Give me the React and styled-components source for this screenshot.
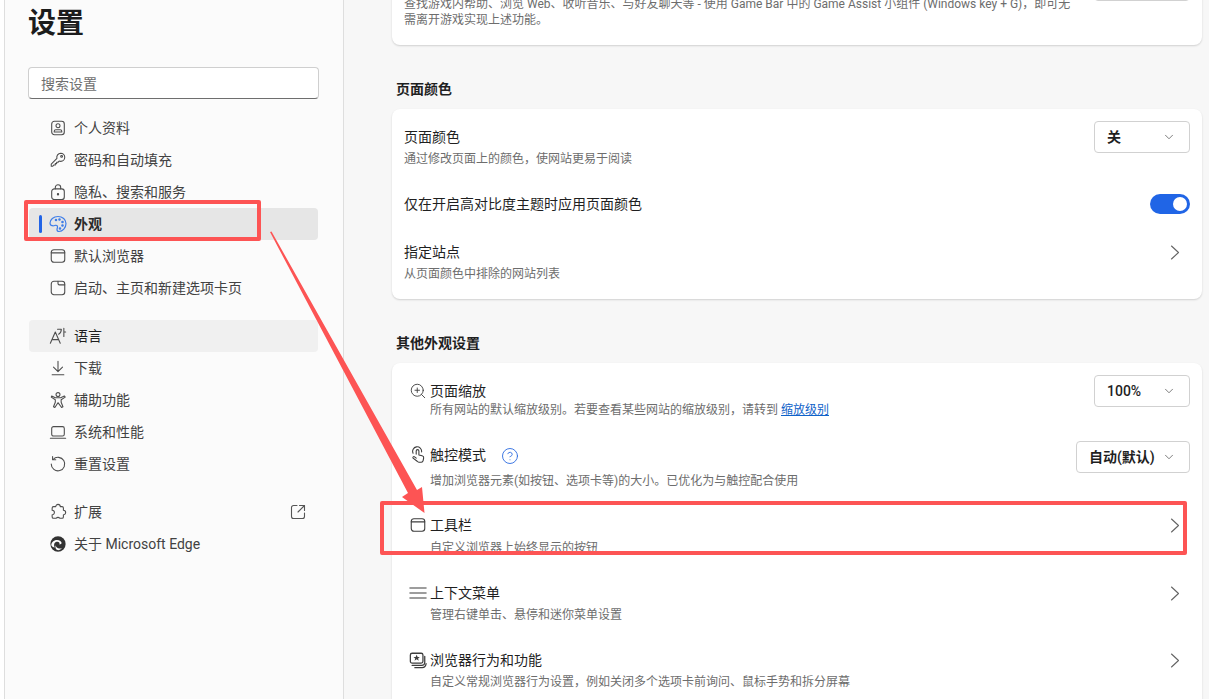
import React from 'react';
import styled, { createGlobalStyle } from 'styled-components';
import { ChevronDown, CircleHelp, ZoomIn } from 'lucide-react';

const GlobalStyle = createGlobalStyle`
	html, body { margin: 0; padding: 0; background: #fff; }
	body { font-family: Roboto, "Noto Sans CJK SC", sans-serif; color: #1f1f1f; }
	* { box-sizing: border-box; }
`;

const Page = styled.div`
	position: relative;
	display: flex;
	height: 100vh;
	padding-left: 4px;
	overflow: hidden;
`;

const Sidebar = styled.aside`
	flex: 0 0 340px;
	padding: 4px 0 0 23px;
	background: #fbfbfb;
	border-left: 1px solid #dedede;
	border-right: 1px solid #dedede;
`;

const Title = styled.h1`
	margin: 0 0 23px;
	font-size: 28px;
	line-height: 40px;
	font-weight: 700;
	color: #1c1c1c;
`;

const Search = styled.input`
	display: block;
	width: 291px;
	height: 32px;
	padding: 2px 12px 0;
	margin-bottom: 13px;
	font: inherit;
	font-size: 14px;
	background: #fff;
	border: 1px solid #cfcfcf;
	border-bottom-color: #6e6e6e;
	border-radius: 4px;
	&::placeholder { color: #6f6f6f; opacity: 1; }
`;

const NavGroup = styled.nav`
	margin: 0 0 16px 1px;
	width: 289px;
`;

const NavItem = styled.div`
	position: relative;
	display: flex;
	align-items: center;
	height: 32px;
	padding: 0 12px 0 19px;
	gap: 6px;
	font-size: 14px;
	border-radius: 4px;
	color: ${(p) => (p.$active ? '#2b2b2b' : p.$hover ? '#1f1f1f' : '#424242')};
	font-weight: ${(p) => (p.$active ? 700 : 400)};
	background: ${(p) => (p.$active ? '#e6e6e6' : p.$hover ? '#f0f0f0' : 'transparent')};
`;

const NavLabel = styled.span`
	margin-bottom: 2px;
`;

const ActiveBar = styled.span`
	position: absolute;
	left: 10px;
	top: 7px;
	width: 3px;
	height: 18px;
	border-radius: 2px;
	background: #2264e6;
`;

const IconSlot = styled.span`
	display: flex;
	align-items: center;
	justify-content: center;
	flex: 0 0 20px;
	width: 20px;
	height: 20px;
	color: ${(p) => p.$color || '#4d4d4d'};
`;

const External = styled.span`
	display: flex;
	margin-left: auto;
	color: #555;
`;

const Main = styled.main`
	flex: 1;
	padding: 0 7px 0 48px;
	background: #f7f7f7;
	overflow: hidden;
`;

const Card = styled.section`
	background: #fff;
	border-radius: 8px;
	padding: 4px 0;
	box-shadow: 0 1px 2px rgba(0, 0, 0, 0.16);
	margin-top: ${(p) => p.$top || 0}px;
`;

const Heading = styled.h2`
	margin: 34px 0 10px 4px;
	font-size: 14px;
	line-height: 20px;
	font-weight: 700;
	color: #1f1f1f;
`;

const Row = styled.div`
	display: flex;
	align-items: flex-start;
	padding: 14px 12px ${(p) => p.$bottom ?? 14}px;
`;

const SwitchRow = styled(Row)`
	align-items: center;
	height: 48px;
	padding: 0 12px;
`;

const RowIcon = styled.span`
	display: flex;
	align-items: center;
	justify-content: center;
	flex: 0 0 18px;
	height: 20px;
	margin: 0 3px 0 5px;
	color: #3d3d3d;
`;

const RowBody = styled.div`
	flex: 1;
	min-width: 0;
`;

const RowTitle = styled.div`
	display: flex;
	align-items: center;
	height: 20px;
	font-size: 14px;
	line-height: 20px;
	color: #1f1f1f;
`;

const HelpIcon = styled.span`
	display: flex;
	margin: 2px 0 0 15px;
	color: #2b6be0;
`;

const Desc = styled.div`
	margin: ${(p) => p.$gap ?? 4}px 0 -1px;
	font-size: 12px;
	line-height: 16px;
	color: #6d6d6d;
`;

const DocLink = styled.a`
	color: #0f62c9;
	text-decoration: underline;
`;

const Select = styled.div`
	display: flex;
	align-items: center;
	justify-content: space-between;
	flex: 0 0 ${(p) => p.$width || 96}px;
	height: 32px;
	margin-top: ${(p) => p.$top ?? -6}px;
	padding: 0 13px 0 12px;
	font-size: 14px;
	font-weight: ${(p) => p.$weight || 600};
	color: #1f1f1f;
	background: #fff;
	border: 1px solid #d1d1d1;
	border-radius: 4px;
	svg { color: #555; }
`;

const SelectValue = styled.span`
	margin-bottom: ${(p) => (p.$latin ? 0 : 2)}px;
`;

const Toggle = styled.span`
	display: block;
	position: relative;
	flex: 0 0 40px;
	height: 20px;
	margin-left: auto;
	border-radius: 10px;
	background: #2065e6;
	&::after {
		content: '';
		position: absolute;
		right: 3px;
		top: 3px;
		width: 14px;
		height: 14px;
		border-radius: 50%;
		background: #fff;
	}
`;

const ChevronSvg = styled.svg`
	flex: none;
	margin: 3px 10px 0 0;
	color: #636363;
`;

const Marker = styled.div`
	position: absolute;
	left: ${(p) => p.$x}px;
	top: ${(p) => p.$y}px;
	width: ${(p) => p.$w}px;
	height: ${(p) => p.$h}px;
	border: 4px solid #fd5454;
	border-radius: 2px;
	pointer-events: none;
`;

const ArrowLayer = styled.svg`
	position: absolute;
	left: 0;
	top: 0;
	pointer-events: none;
`;

const Svg = ({ children, size = 18, weight = 1.2 }) => (
	<svg width={size} height={size} viewBox="0 0 20 20" fill="none" stroke="currentColor" strokeWidth={weight} strokeLinecap="round" strokeLinejoin="round">
		{children}
	</svg>
);

const RowChevron = () => (
	<ChevronSvg width="10" height="15" viewBox="0 0 10 15" fill="none" stroke="currentColor" strokeWidth="1.1" strokeLinecap="round" strokeLinejoin="round">
		<path d="M1.500 1 8.500 7.500 1.500 14" />
	</ChevronSvg>
);

const ProfileIcon = () => (
	<Svg>
		<rect x="3" y="2.500" width="14" height="15" rx="3" />
		<circle cx="10" cy="7.500" r="2.200" />
		<path d="M5.800 14.500v-.8c0-1 .8-1.700 1.800-1.700h4.800c1 0 1.800.7 1.800 1.700v.8z" />
	</Svg>
);
const KeyIcon = () => (
	<Svg>
		<path d="M13 2.500a4.500 4.500 0 0 1 0 9c-.6 0-1.200-.1-1.700-.3L10 12.500H8.500V14H7v1.500H5.500L4 17H2.500v-2.500l6.300-6.300A4.500 4.500 0 0 1 13 2.500z" />
		<circle cx="14" cy="6" r="1" />
	</Svg>
);
const LockIcon = () => (
	<Svg>
		<rect x="3" y="6.500" width="14" height="12" rx="3" />
		<path d="M7 6.500V5a3 3 0 0 1 6 0v1.500" />
		<circle cx="10" cy="12.500" r="0.7" fill="currentColor" />
	</Svg>
);
const PaletteIcon = () => (
	<svg width="20" height="20" viewBox="0 0 20 20" fill="none" stroke="currentColor" strokeWidth="1.200" strokeLinecap="round" strokeLinejoin="round">
		<path d="M10 2.500c4.400 0 8 3 8 7 0 4.500-3.500 8-7 8-1.500 0-2-1-2-2 0-1 .5-1.500.5-2.500 0-1.200-1-2-2.200-1.700-1 .3-1.800.7-3 .4C3 11.500 2 10.500 2 9c0-3.500 3.500-6.500 8-6.500z" />
		<circle cx="8" cy="6" r="0.700" fill="currentColor" />
		<circle cx="11.500" cy="5.500" r="0.700" fill="currentColor" />
		<circle cx="14.500" cy="8" r="0.700" fill="currentColor" />
		<circle cx="14.500" cy="11.500" r="0.700" fill="currentColor" />
		<circle cx="12" cy="14.500" r="0.700" fill="currentColor" />
	</svg>
);
const BrowserIcon = () => (
	<Svg>
		<rect x="2.500" y="3" width="15" height="14" rx="3" />
		<path d="M2.500 6.500h15" />
	</Svg>
);
const StartIcon = () => (
	<Svg>
		<rect x="2.500" y="2.500" width="15" height="15" rx="3" />
		<path d="M10 2.500v2.500a1.500 1.500 0 0 0 1.500 1.500h6" />
	</Svg>
);
const LanguageIcon = () => (
	<Svg>
		<path d="M1.500 18 7 5.500 12.500 18M3.500 14h7" />
		<path d="M9.500 2.500h4.200c0 2.500-1 4.300-3 5.500M16.500 1.500v9M16.500 5.500h2" />
	</Svg>
);
const DownloadIcon = () => (
	<Svg>
		<path d="M10 2.500v11M5 9l5 5 5-5M3.500 17.500h13" />
	</Svg>
);
const AccessIcon = () => (
	<Svg>
		<circle cx="10" cy="4" r="2.200" />
		<path d="M3 5.500 7 7.500h6l4-2 1 1.300-4.500 3v2.700l2 5-1.500.800L10 13l-3.500 5.300-1.500-.800 2-5V9.800L2.500 6.800z" />
	</Svg>
);
const LaptopIcon = () => (
	<Svg>
		<rect x="3" y="4" width="14" height="10.500" rx="2" />
		<path d="M1.500 17h17" />
	</Svg>
);
const ResetIcon = () => (
	<Svg>
		<path d="M4.500 5A7.500 7.500 0 1 1 2.500 10" />
		<path d="M4 1.800V5.300h3.500" />
	</Svg>
);
const ExtensionIcon = () => (
	<Svg>
		<path d="M7.500 4a2.500 2.500 0 0 1 5 0h2a1.500 1.500 0 0 1 1.500 1.500v2.500a2.500 2.500 0 0 1 0 5v2.500a1.500 1.500 0 0 1-1.500 1.500h-2.500a2.500 2.500 0 0 0-4 0H5a1.500 1.500 0 0 1-1.500-1.500V13a2.500 2.500 0 0 0 0-5V5.500A1.500 1.500 0 0 1 5 4z" />
	</Svg>
);
const EdgeIcon = () => (
	<svg width="18" height="18" viewBox="0 0 20 20">
		<circle cx="10" cy="10" r="8.500" fill="#333" />
		<path d="M2.500 11c.5-3.500 3.500-5.500 6.500-5.500 2.800 0 5 1.500 5 3.500 0 1-1 1.500-2.500 1.500 1-2-1-3.500-3-3C6 8 4.800 11 6.500 14c-2 -.5-3.500-1.500-4-3z" fill="#fff" />
		<path d="M7.500 11.500c0 3 3.500 4.500 7 3-1 1.500-3 2.500-5 2.300-2-.5-3-3-2-5.300z" fill="#fff" />
	</svg>
);
const ExternalIcon = () => (
	<svg width="16" height="16" viewBox="0 0 16 16" fill="none" stroke="currentColor" strokeWidth="1.100" strokeLinecap="round" strokeLinejoin="round">
		<path d="M7 1.500H3.500a2 2 0 0 0-2 2v9a2 2 0 0 0 2 2h9a2 2 0 0 0 2-2V9" />
		<path d="M9.500 1.500h5v5M14.500 1.500 8 8" />
	</svg>
);
const MenuIcon = () => (
	<svg width="18" height="18" viewBox="0 0 18 18" fill="none" stroke="currentColor" strokeWidth="1.100" strokeLinecap="square">
		<path d="M1 4h16M1 9h16M1 14h16" />
	</svg>
);
const TouchIcon = () => (
	<Svg>
		<path d="M4.500 8a5 5 0 1 1 9.500-1.500" />
		<path d="M8 9V5.500a1.500 1.500 0 0 1 3 0V10l3.500.8c1.200.3 2 1.300 1.800 2.500l-.6 3c-.2 1-1 1.700-2 1.700h-2.700c-.8 0-1.500-.4-1.900-1L4.500 13.500c-.7-1 .7-2.300 1.700-1.500L8 13.500" />
	</Svg>
);
const BehaviorIcon = () => (
	<Svg weight={1.400}>
		<rect x="1.500" y="2.500" width="14" height="11" rx="2" />
		<path d="m8.500 4.300 1.100 2.300h2.400l-1.900 1.600.7 2.500-2.300-1.400-2.300 1.400.7-2.500L5 6.600h2.400z" fill="currentColor" stroke="none" />
		<path d="M3.500 16h10.500a3.500 3.500 0 0 0 3.500-3.500V6" />
		<path d="M6.500 18.500h8a5 5 0 0 0 4.500-4.500" />
	</Svg>
);

const topNav = [
	{ label: '个人资料', icon: <ProfileIcon /> },
	{ label: '密码和自动填充', icon: <KeyIcon /> },
	{ label: '隐私、搜索和服务', icon: <LockIcon /> },
	{ label: '外观', icon: <PaletteIcon />, active: true },
	{ label: '默认浏览器', icon: <BrowserIcon /> },
	{ label: '启动、主页和新建选项卡页', icon: <StartIcon /> },
];

const midNav = [
	{ label: '语言', icon: <LanguageIcon />, hover: true },
	{ label: '下载', icon: <DownloadIcon /> },
	{ label: '辅助功能', icon: <AccessIcon /> },
	{ label: '系统和性能', icon: <LaptopIcon /> },
	{ label: '重置设置', icon: <ResetIcon /> },
];

const NavList = ({ items }) => (
	<NavGroup>
		{items.map((item) => (
			<NavItem key={item.label} $active={item.active} $hover={item.hover}>
				{item.active && <ActiveBar />}
				<IconSlot $color={item.active ? '#3f7de8' : undefined}>{item.icon}</IconSlot>
				<NavLabel>{item.label}</NavLabel>
				{item.external && (
					<External>
						<ExternalIcon />
					</External>
				)}
			</NavItem>
		))}
	</NavGroup>
);

const SelectBox = ({ value, width, weight, top, latin }) => (
	<Select $width={width} $weight={weight} $top={top}>
		<SelectValue $latin={latin}>{value}</SelectValue>
		<ChevronDown size={14} strokeWidth={1.3} />
	</Select>
);

const App = () => {
	return (
		<>
			<GlobalStyle />
			<Page>
				<Sidebar>
					<Title>设置</Title>
					<Search placeholder="搜索设置" readOnly />
					<NavList items={topNav} />
					<NavList items={midNav} />
					<NavList
						items={[
							{ label: '扩展', icon: <ExtensionIcon />, external: true },
							{ label: '关于 Microsoft Edge', icon: <EdgeIcon /> },
						]}
					/>
				</Sidebar>
				<Main>
					<Card $top={-60}>
						<Row>
							<RowBody>
								<Desc $gap={38}>
									查找游戏内帮助、浏览 Web、收听音乐、与好友聊天等 - 使用 Game Bar 中的 Game Assist 小组件 (Windows key + G)，即可无
									<br />
									需离开游戏实现上述功能。
								</Desc>
							</RowBody>
							<SelectBox value="" top={11} />
						</Row>
					</Card>

					<Heading>页面颜色</Heading>
					<Card>
						<Row>
							<RowBody>
								<RowTitle>页面颜色</RowTitle>
								<Desc>通过修改页面上的颜色，使网站更易于阅读</Desc>
							</RowBody>
							<SelectBox value="关" />
						</Row>
						<SwitchRow>
							<RowTitle>仅在开启高对比度主题时应用页面颜色</RowTitle>
							<Toggle />
						</SwitchRow>
						<Row>
							<RowBody>
								<RowTitle>指定站点</RowTitle>
								<Desc>从页面颜色中排除的网站列表</Desc>
							</RowBody>
							<RowChevron />
						</Row>
					</Card>

					<Heading>其他外观设置</Heading>
					<Card>
						<Row>
							<RowIcon>
								<ZoomIn size={18} strokeWidth={1.2} />
							</RowIcon>
							<RowBody>
								<RowTitle>页面缩放</RowTitle>
								<Desc $gap={1}>
									所有网站的默认缩放级别。若要查看某些网站的缩放级别，请转到 <DocLink href="#">缩放级别</DocLink>
								</Desc>
							</RowBody>
							<SelectBox value="100%" weight={500} latin />
						</Row>
						<Row $bottom={13}>
							<RowIcon>
								<TouchIcon />
							</RowIcon>
							<RowBody>
								<RowTitle>
									触控模式
									<HelpIcon>
										<CircleHelp size={18} strokeWidth={1.2} />
									</HelpIcon>
								</RowTitle>
								<Desc $gap={8}>增加浏览器元素(如按钮、选项卡等)的大小。已优化为与触控配合使用</Desc>
							</RowBody>
							<SelectBox value="自动(默认)" width={114} top={-4} />
						</Row>
						<Row>
							<RowIcon>
								<BrowserIcon />
							</RowIcon>
							<RowBody>
								<RowTitle>工具栏</RowTitle>
								<Desc $gap={5}>自定义浏览器上始终显示的按钮</Desc>
							</RowBody>
							<RowChevron />
						</Row>
						<Row>
							<RowIcon>
								<MenuIcon />
							</RowIcon>
							<RowBody>
								<RowTitle>上下文菜单</RowTitle>
								<Desc>管理右键单击、悬停和迷你菜单设置</Desc>
							</RowBody>
							<RowChevron />
						</Row>
						<Row>
							<RowIcon>
								<BehaviorIcon />
							</RowIcon>
							<RowBody>
								<RowTitle>浏览器行为和功能</RowTitle>
								<Desc>自定义常规浏览器行为设置，例如关闭多个选项卡前询问、鼠标手势和拆分屏幕</Desc>
							</RowBody>
							<RowChevron />
						</Row>
					</Card>
				</Main>
				<Marker $x={24} $y={200} $w={237} $h={41} />
				<Marker $x={380} $y={501} $w={807} $h={54} />
				<ArrowLayer width="1209" height="699" viewBox="0 0 1209 699">
					<polygon points="270,232 271.500,231.500 417,490 422,487 424.500,513 402,497 408,493" fill="#fd5454" />
				</ArrowLayer>
			</Page>
		</>
	);
};

export default App;
